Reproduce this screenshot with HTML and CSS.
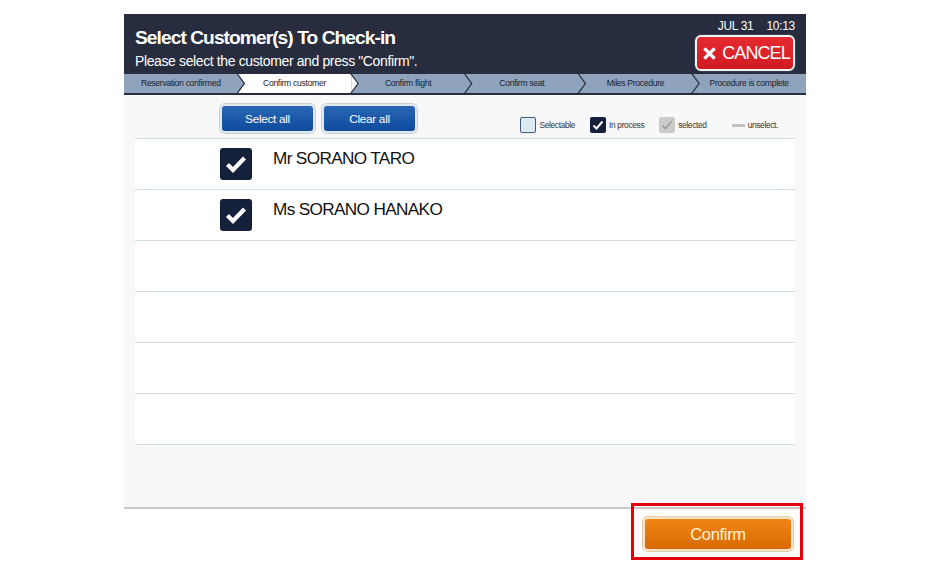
FILE: index.html
```html
<!DOCTYPE html>
<html lang="en">
<head>
<meta charset="utf-8">
<title>Select Customer(s) To Check-in</title>
<link rel="stylesheet" href="styles.css">
</head>
<body>
<div class="screen">
  <header class="hdr">
    <div class="titles">
      <h1 class="title">Select Customer(s) To Check-in</h1>
      <p class="subtitle">Please select the customer and press "Confirm".</p>
    </div>
    <div class="hdr-right">
      <div class="clock"><span>JUL 31</span><span>10:13</span></div>
      <button class="cancel" type="button">
        <svg class="cancel-x" viewBox="0 0 16 16" width="15" height="15"><path d="M2.5 2.5 L13.5 13.5 M13.5 2.5 L2.5 13.5" stroke="#fff" stroke-width="3.6" stroke-linecap="butt" fill="none"/></svg>
        <span>CANCEL</span>
      </button>
    </div>
  </header>
  <ol class="steps">
    <li class="step">Reservation confirmed</li>
    <li class="step active">Confirm customer</li>
    <li class="step">Confirm flight</li>
    <li class="step">Confirm seat</li>
    <li class="step">Miles Procedure</li>
    <li class="step last">Procedure is complete</li>
  </ol>
  <main class="body">
    <div class="toolbar">
      <div class="btns">
        <button class="bluebtn" type="button">Select all</button>
        <button class="bluebtn" type="button">Clear all</button>
      </div>
      <div class="legend">
        <span class="lg"><span class="lg-box lg-selectable"></span>Selectable</span>
        <span class="lg"><span class="lg-box lg-inproc"><svg viewBox="0 0 16 16" width="16" height="16"><path d="M3.5 8.5 L6.5 11.5 L12.5 4.5" stroke="#fff" stroke-width="2" fill="none"/></svg></span>In process</span>
        <span class="lg"><span class="lg-box lg-selected"><svg viewBox="0 0 16 16" width="16" height="16"><path d="M3.5 8.5 L6.5 11.5 L12.5 4.5" stroke="#9a9a9a" stroke-width="1.6" fill="none"/></svg></span>selected</span>
        <span class="lg lg-un"><span class="lg-bar"></span>unselect.</span>
      </div>
    </div>
    <ul class="list">
      <li class="row">
        <span class="chk"><svg viewBox="0 0 32 32" width="32" height="32"><path d="M7.5 16.5 L13 22 L24.5 10" stroke="#fff" stroke-width="4.2" fill="none"/></svg></span>
        <span class="name">Mr SORANO TARO</span>
      </li>
      <li class="row">
        <span class="chk"><svg viewBox="0 0 32 32" width="32" height="32"><path d="M7.5 16.5 L13 22 L24.5 10" stroke="#fff" stroke-width="4.2" fill="none"/></svg></span>
        <span class="name">Ms SORANO HANAKO</span>
      </li>
      <li class="row"></li>
      <li class="row"></li>
      <li class="row"></li>
      <li class="row"></li>
    </ul>
  </main>
  <footer class="foot">
    <div class="highlight">
      <button class="confirm" type="button">Confirm</button>
    </div>
  </footer>
</div>
</body>
</html>
```
FILE: styles.css
```css
* { box-sizing: border-box; }
html, body { margin: 0; padding: 0; background: #fff; }
body {
  font-family: "Liberation Sans", Arial, sans-serif;
  color: #111;
}
.screen {
  width: 682px;
  margin: 14px 0 0 124px;
  display: flex;
  flex-direction: column;
}
/* header */
.hdr {
  height: 60px;
  background: #272d3e;
  display: flex;
  justify-content: space-between;
  padding: 0 11px;
  color: #fff;
}
.titles { padding-top: 13px; }
.title {
  margin: 0;
  font-size: 19.2px;
  line-height: 22px;
  font-weight: bold;
  letter-spacing: -0.95px;
}
.subtitle {
  margin: 4px 0 0;
  font-size: 14px;
  line-height: 16px;
  letter-spacing: -0.38px;
}
.hdr-right {
  display: flex;
  flex-direction: column;
  align-items: flex-end;
  padding-top: 5px;
}
.clock {
  display: flex;
  gap: 13px;
  font-size: 12px;
  line-height: 14px;
  letter-spacing: -0.3px;
}
.cancel {
  margin-top: 2px;
  width: 100px;
  height: 36px;
  border: 2px solid #f4f4f4;
  border-radius: 6px;
  background: linear-gradient(#e42a30, #d01a22);
  box-shadow: 0 0 0 1px #3a3f4d;
  color: #fff;
  font-family: inherit;
  font-size: 18px;
  letter-spacing: -0.9px;
  display: flex;
  align-items: center;
  justify-content: center;
  gap: 5px;
  padding: 0 0 0 2px;
}
.cancel-x { flex: none; }
/* steps */
.steps {
  list-style: none;
  margin: 0;
  padding: 0;
  display: flex;
  height: 21px;
  background: #8fa4bc;
  border-bottom: 2px solid #262d3e;
}
.step {
  flex: 1;
  position: relative;
  font-size: 8.6px;
  letter-spacing: -0.3px;
  line-height: 19px;
  text-align: center;
  color: #17202e;
  background: #8fa4bc;
}
.step.active { background: #fff; }
.step:not(.last)::before {
  content: "";
  position: absolute;
  top: 0;
  left: 100%;
  width: 7px;
  height: 19px;
  background: inherit;
  clip-path: polygon(0 0, 100% 50%, 0 100%);
  z-index: 2;
}
.step:not(.last)::after {
  content: "";
  position: absolute;
  top: 0;
  left: calc(100% - 1px);
  width: 10px;
  height: 19px;
  background: #262d3e;
  clip-path: polygon(0 0, 1.5px 0, 8.5px 50%, 1.5px 100%, 0 100%, 7px 50%);
  z-index: 3;
}
/* body */
.body {
  height: 414px;
  background: #f8f8f8;
  border-bottom: 2px solid #c9c9c9;
  padding: 0 11px;
}
.toolbar {
  height: 43px;
  display: flex;
  justify-content: space-between;
  align-items: flex-start;
  padding-top: 9px;
}
.btns {
  display: flex;
  gap: 7px;
  margin-left: 85px;
}
.bluebtn {
  width: 95px;
  height: 29px;
  border: 2px solid #e2e8ef;
  border-radius: 5px;
  background: linear-gradient(#2a66b5, #0f4b9c);
  box-shadow: 0 0 0 1px #c7d1dc;
  color: #fff;
  font-family: inherit;
  font-size: 11.8px;
  letter-spacing: -0.3px;
  padding: 0;
}
.legend {
  display: flex;
  align-items: center;
  margin-top: 13px;
  margin-right: 17px;
  font-size: 8.4px;
  letter-spacing: -0.35px;
  color: #333;
}
.lg {
  display: flex;
  align-items: center;
  gap: 3px;
  margin-left: 15px;
}
.lg-box {
  width: 16px;
  height: 16px;
  border-radius: 2px;
  display: block;
}
.lg-box svg { display: block; }
.lg-selectable { background: #dde9f3; border: 1.5px solid #3d5c7c; }
.lg-inproc { background: #15203a; }
.lg-selected { background: #cbcbcb; }
.lg-un { margin-left: 25px; }
.lg-bar { width: 13px; height: 3px; background: #c2c2c2; display: block; }
/* list */
.list {
  list-style: none;
  margin: 0;
  padding: 0;
  border-top: 1.5px solid #cfdfe2;
}
.row {
  height: 51px;
  background: #fff;
  border-bottom: 1.5px solid #cfdfe2;
  display: flex;
  align-items: flex-start;
  padding: 9px 0 0 85px;
}
.chk {
  width: 32px;
  height: 32px;
  border-radius: 3px;
  background: #15203a;
  display: block;
}
.chk svg { display: block; }
.name {
  margin-left: 21px;
  font-size: 17.2px;
  letter-spacing: -0.65px;
  line-height: 20px;
  color: #111;
}
/* footer */
.foot {
  display: flex;
  justify-content: flex-end;
  padding-right: 3px;
}
.highlight {
  margin-top: -6px;
  width: 172px;
  height: 57px;
  border: 3px solid #e2000f;
  padding: 11px 7px 0 9px;
}
.confirm {
  width: 150px;
  height: 34px;
  border: 2px solid #f6e3c8;
  border-radius: 5px;
  background: linear-gradient(#f08516, #d96a04);
  box-shadow: 0 0 0 1px #e5c9a3;
  color: #fff4d6;
  font-family: inherit;
  font-size: 16.5px;
  letter-spacing: -0.3px;
  padding: 0;
}
```
